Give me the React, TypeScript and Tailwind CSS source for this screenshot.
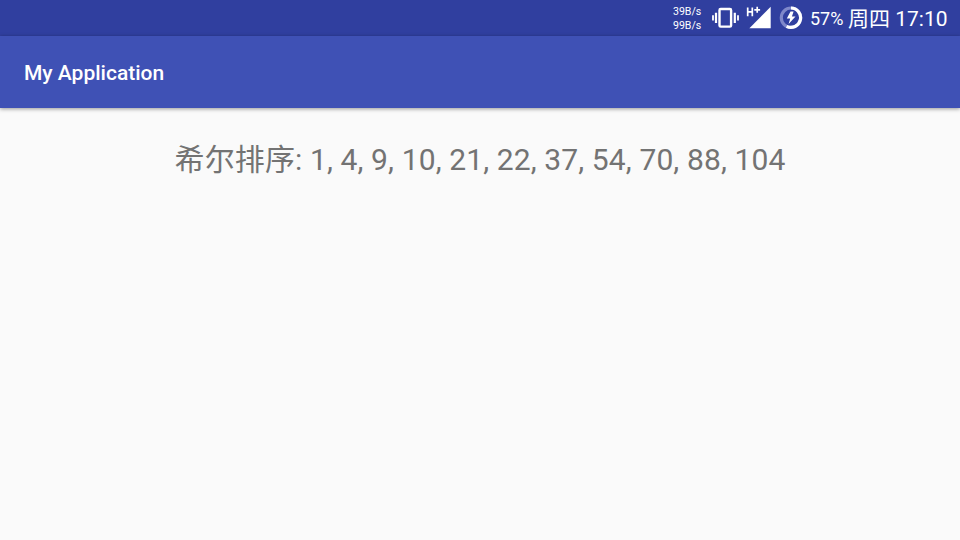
function VibrateIcon() {
  return (
    <svg className="ml-[9px] h-[36px] w-[28px] shrink-0" viewBox="0 0 28 36" fill="none" stroke="#fff">
      <rect x="8.5" y="9" width="11.6" height="17.6" rx="1.2" strokeWidth="2.4" />
      <path d="M5 12.8V23M23.8 12.8V23" strokeWidth="2.2" />
      <path d="M2 15.2V20.6M27 15.2V20.6" strokeWidth="1.8" />
    </svg>
  );
}

function SignalIcon() {
  return (
    <svg className="ml-[7px] h-[36px] w-[25px] shrink-0" viewBox="0 0 25 36" fill="none">
      <path d="M24.7 6.8V28.2H3.4Z" fill="#fff" />
      <path d="M1.7 7.5V16.3M6.3 7.5V16.3M1.7 11.9H6.3" stroke="#fff" strokeWidth="1.7" />
      <path d="M11.2 6.8V12.8M8.3 9.8H14.1" stroke="#fff" strokeWidth="1.7" />
    </svg>
  );
}

function BatteryIcon() {
  return (
    <svg className="ml-[8px] h-[36px] w-[24px] shrink-0" viewBox="0 0 24 36" fill="none">
      <circle cx="12" cy="17.7" r="9.7" stroke="#7f88ca" strokeWidth="3.2" />
      <path d="M12 8A9.7 9.7 0 1 1 7.6 26.4" stroke="#fff" strokeWidth="3.2" />
      <path d="M14.6 11.4H11.5L7.8 18.6H11.2L9.6 24L16.5 16.4H12.9Z" fill="#fff" />
    </svg>
  );
}

export default function App() {
  return (
    <div className="flex h-[540px] w-[960px] flex-col overflow-hidden bg-[#fafafa] font-['Roboto','Noto_Sans_CJK_SC',sans-serif]">
      <div className="flex h-[36px] shrink-0 items-center justify-start bg-[#303f9f] pl-[673px] text-white">
        <div className="w-[29px] shrink-0 whitespace-nowrap pt-[2px] text-[11px] leading-[14px]">
          <div className="w-fit origin-left scale-x-[0.96]">39B/s</div>
          <div className="w-fit origin-left scale-x-[0.96]">99B/s</div>
        </div>
        <VibrateIcon />
        <SignalIcon />
        <BatteryIcon />
        <span className="ml-[7px] w-[38px] shrink-0 whitespace-nowrap pt-[2px] text-[18px] leading-[34px]">57%</span>
        <span className="whitespace-nowrap pt-[2px] text-[21px] leading-[36px]">周四 17:10</span>
      </div>
      <header className="z-10 flex h-[72px] shrink-0 items-center bg-[#3f51b5] pl-6 pt-px shadow-[0_1px_4px_rgba(0,0,0,0.4)]">
        <h1 className="text-[21px] font-medium leading-6 text-white">My Application</h1>
      </header>
      <main className="flex justify-center pt-[34px]">
        <p className="whitespace-nowrap text-[30px] leading-[36px] tracking-[0.12px] text-[#737373]">
          希尔排序: 1, 4, 9, 10, 21, 22, 37, 54, 70, 88, 104
        </p>
      </main>
    </div>
  );
}
